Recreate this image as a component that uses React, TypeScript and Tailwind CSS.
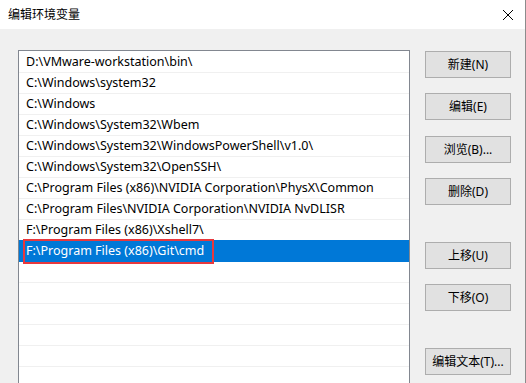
import React from "react";

const paths = [
  "D:\\VMware-workstation\\bin\\",
  "C:\\Windows\\system32",
  "C:\\Windows",
  "C:\\Windows\\System32\\Wbem",
  "C:\\Windows\\System32\\WindowsPowerShell\\v1.0\\",
  "C:\\Windows\\System32\\OpenSSH\\",
  "C:\\Program Files (x86)\\NVIDIA Corporation\\PhysX\\Common",
  "C:\\Program Files\\NVIDIA Corporation\\NVIDIA NvDLISR",
  "F:\\Program Files (x86)\\Xshell7\\",
  "F:\\Program Files (x86)\\Git\\cmd",
  "",
  "",
  "",
  "",
  "",
  "",
];

const SELECTED = 9;

const font = { fontFamily: '"Noto Sans", "Noto Sans CJK SC", sans-serif' };

const Btn: React.FC<{ label: string; className?: string }> = ({ label, className }) => (
  <button
    type="button"
    className={`h-[27px] w-[86px] border border-[#adadad] bg-[#e1e1e1] text-[12px] text-black flex items-center justify-center ${className ?? ""}`}
  >
    {label}
  </button>
);

const App: React.FC = () => {
  return (
    <div className="w-[526px] h-[383px] overflow-hidden bg-[#f0f0f0] flex flex-col border-r border-[#8c8c8c]" style={font}>
      {/* Title bar */}
      <div className="h-[29px] bg-white flex items-center justify-between pl-[8px] pr-[11px] shrink-0">
        <span className="text-[12px] text-black">编辑环境变量</span>
        <svg width="12" height="12" viewBox="0 0 12 12" className="text-black">
          <path d="M1 1L11 11M11 1L1 11" stroke="currentColor" strokeWidth="1" />
        </svg>
      </div>

      {/* Body */}
      <div className="flex pl-[18px] pt-[21px]">
        {/* Path list */}
        <div className="relative w-[392px] h-[400px] border border-[#828790] bg-white pt-[1px] shrink-0">
          {paths.map((p, i) => {
            const selected = i === SELECTED;
            const beforeSelected = i === SELECTED - 1;
            return (
              <div
                key={i}
                className={`h-[21px] border-b flex items-center pl-[7px] text-[12.5px] whitespace-nowrap ${
                  selected
                    ? "bg-[#0078d7] text-white border-[#0078d7]"
                    : beforeSelected
                    ? "text-black border-[#0078d7]"
                    : "text-black border-[#f0f0f0]"
                }`}
              >
                {p}
              </div>
            );
          })}
          {/* red highlight annotation */}
          <div className="absolute left-[4px] top-[188px] w-[191px] h-[25px] border-2 border-[#e8383d]" />
        </div>

        {/* Buttons */}
        <div className="flex flex-col pl-[15px] pt-[1px]">
          <Btn label="新建(N)" />
          <Btn label="编辑(E)" className="mt-[15px]" />
          <Btn label="浏览(B)..." className="mt-[16px]" />
          <Btn label="删除(D)" className="mt-[15px]" />
          <Btn label="上移(U)" className="mt-[37px]" />
          <Btn label="下移(O)" className="mt-[15px]" />
          <Btn label="编辑文本(T)..." className="mt-[37px]" />
        </div>
      </div>
    </div>
  );
};

export default App;
